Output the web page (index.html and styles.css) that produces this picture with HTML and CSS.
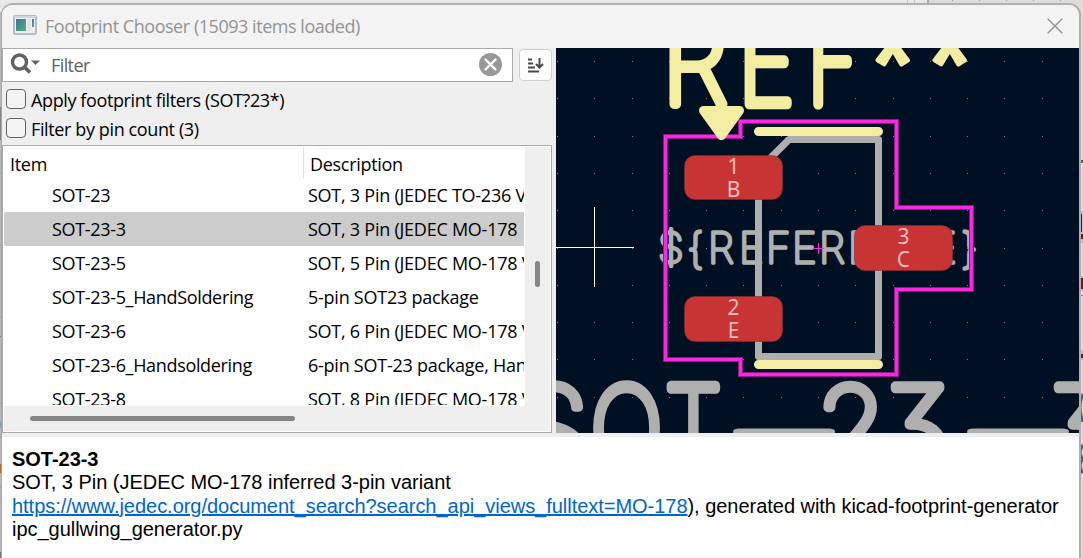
FILE: index.html
```html
<!DOCTYPE html>
<html lang="en">
<head>
<meta charset="utf-8">
<title>Footprint Chooser</title>
<link rel="stylesheet" href="styles.css">
</head>
<body>
<div class="desktop">
  <svg class="backdrop" width="1083" height="558" viewBox="0 0 1083 558">
    <rect width="928" height="20" fill="#e8e8e8"/>
    <rect x="907" width="1" height="5" fill="#c8c8c8"/><rect x="914" width="1" height="5" fill="#c8c8c8"/>
    <rect x="927" width="2" height="5" fill="#aaa"/>
    <rect y="12" width="3" height="546" fill="#b8b8ba"/>
    <rect y="107" width="3" height="33" fill="#858585"/>
    <path d="M0 173h3M0 245h3M0 317h3M0 403h3M0 437h3M0 487h3" stroke="#999" fill="none"/>
    <path d="M0 336q3 1 2 10" stroke="#6f6f6f" fill="none"/>
    <rect y="421" width="2" height="7" fill="#75a9ab"/><rect y="464" width="2" height="9" fill="#a76b27"/>
    <rect y="552" width="3" height="6" fill="#777"/>
    <path d="M952 .5h1M979 .5h1M1006 .5h1M1033 .5h1M1060 .5h1" stroke="#999"/>
    <rect x="1079" y="160" width="4" height="3" fill="#108a1e"/>
    <path d="M1081 211h2v32h-2zM1081 276h2v15h-2zM1081 350h2v10h-2z" fill="#98c8df"/>
    <path d="M1079 214h3v18h-3zM1079 234h4v5h-4zM1079 278h4v11h-4zM1079 354h4v4h-4z" fill="#800b10"/>
    <path d="M1083 394q-6 13 0 28M1083 445q-6 8 0 14q-6 6 0 14" stroke="#247479" stroke-width="3" fill="none"/>
    <path d="M1079 295.500h4" stroke="#888"/>
  </svg>
  <main class="window">
    <header class="titlebar">
      <svg class="app-icon" width="24" height="20" viewBox="0 0 24 20">
        <defs><linearGradient id="pane" x1="0" y1="0" x2="1" y2="1"><stop stop-color="#3a769f"/><stop offset="1" stop-color="#58ad7c"/></linearGradient></defs>
        <rect x="1" y="1" width="22" height="18" rx="1" fill="#eef0f2" stroke="#b4bec7" stroke-width="2"/>
        <path d="M1 2h22" stroke="#cdd8e4" stroke-width="2"/>
        <rect x="3" y="4" width="10" height="12" fill="url(#pane)"/>
        <rect x="14" y="4" width="4" height="12" fill="#e2e3e4"/><rect x="19" y="4" width="2" height="8" fill="url(#pane)"/>
      </svg>
      <h1 class="title">Footprint Chooser (15093 items loaded)</h1>
      <svg class="close" width="16" height="16" viewBox="0 0 16 16"><path d="M.7.7l14.600 14.600M15.300.7L.7 15.300" stroke="#929292" stroke-width="1.400"/></svg>
    </header>
    <div class="body">
      <section class="left">
        <div class="search-row">
          <div class="search">
            <svg class="magnifier" width="30" height="22" viewBox="0 0 30 22"><circle cx="9.500" cy="9" r="7" fill="none" stroke="#626262" stroke-width="3.400"/><path d="M14.500 14l5.500 5.500" stroke="#626262" stroke-width="3.800"/><path d="M21 7.500h9l-4.500 4.500z" fill="#626262"/></svg>
            <span class="placeholder">Filter</span>
            <svg class="clear" width="23" height="23" viewBox="0 0 23 23"><circle cx="11.500" cy="11.500" r="11.500" fill="#989898"/><path d="M6.500 6.500l10 10M16.500 6.500l-10 10" stroke="#fff" stroke-width="2.400" stroke-linecap="round"/></svg>
          </div>
          <button class="sort" aria-label="Sort"><svg width="17" height="15" viewBox="0 0 17 15"><path d="M1 2h4M1 6h5M1 10h7M1 14h11" transform="translate(0 -.5)" stroke="#4a4a4a" stroke-width="2"/><path d="M12.500 0v9M9 6l3.500 3.500L16 6" fill="none" stroke="#4a4a4a" stroke-width="2"/></svg></button>
        </div>
        <label class="check"><span class="box"></span><span class="check-text">Apply footprint filters (SOT?23*)</span></label>
        <label class="check"><span class="box"></span><span class="check-text">Filter by pin count (3)</span></label>
        <div class="list">
          <div class="grid">
            <div class="head"><span class="head-item">Item</span><span class="head-desc">Description</span></div>
            <div class="rows">
              <div class="row"><span class="item">SOT-23</span><span class="desc">SOT, 3 Pin (JEDEC TO-236 V</span></div>
              <div class="row selected"><span class="item">SOT-23-3</span><span class="desc">SOT, 3 Pin (JEDEC MO-178</span></div>
              <div class="row"><span class="item">SOT-23-5</span><span class="desc">SOT, 5 Pin (JEDEC MO-178 V</span></div>
              <div class="row"><span class="item">SOT-23-5_HandSoldering</span><span class="desc">5-pin SOT23 package</span></div>
              <div class="row"><span class="item">SOT-23-6</span><span class="desc">SOT, 6 Pin (JEDEC MO-178 V</span></div>
              <div class="row"><span class="item">SOT-23-6_Handsoldering</span><span class="desc">6-pin SOT-23 package, Han</span></div>
              <div class="row"><span class="item">SOT-23-8</span><span class="desc">SOT, 8 Pin (JEDEC MO-178 V</span></div>
            </div>
            <div class="hscroll"><div class="hthumb"></div></div>
          </div>
          <div class="vscroll"><div class="vthumb"></div></div>
        </div>
      </section>
      <svg class="canvas" width="523" height="385" viewBox="556 48 523 385">
        <rect x="556" y="48" width="523" height="385" fill="#001023"/>
        <path class="dots" d="M557 61.500h520M557 98.500h520M557 136.500h520M557 173.500h520M557 210.500h520M557 248.500h520M557 285.500h520M557 322.500h520M557 359.500h520M557 397.500h520"/>
        <g class="value">
          <text transform="translate(518 470)">S</text>
          <text transform="translate(590.500 470) scale(.84 1)">O</text>
          <text transform="translate(665 470) scale(.8 1)">T</text>
          <text transform="translate(712 468) scale(2.850 1)">-</text>
          <text transform="translate(816 470)">2</text>
          <text transform="translate(883 470)">3</text>
          <text transform="translate(946 468) scale(2.850 1)">-</text>
          <text transform="translate(1046 470)">3</text>
        </g>
        <text class="refname" x="658 687 708 739 766 792 819 848 872 903 932 961" y="262.500">${REFERENCE}</text>
        <path class="fab" d="M789 139.500H878.500V356.500H758.500V170z"/>
        <g class="ref">
          <text transform="translate(662 104) scale(.93 1)">R</text>
          <text transform="translate(738 104) scale(.84 1)">E</text>
          <text transform="translate(807.500 104) scale(.75 1)">F</text>
          <text class="star" x="870.500" y="103">*</text>
          <text class="star" x="927.500" y="103">*</text>
        </g>
        <path class="silk" d="M758.500 131.500h120M758.500 364.500h120"/>
        <path class="court-edge" d="M665.500 136.500H740.500V121.500H896.500V207.500H971.500V289.500H896.500V374.500H740.500V359.500H665.500z"/>
        <path class="court" d="M665.500 136.500H740.500V121.500H896.500V207.500H971.500V289.500H896.500V374.500H740.500V359.500H665.500z"/>
        <path class="pin-arrow" d="M703.500 110.500h36l-18 25z"/>
        <path d="M813 248.500h11M818.500 243v11" stroke="#ff26e2"/>
        <g class="pads">
          <rect x="684.500" y="155.500" width="98" height="44" rx="10.500"/>
          <rect x="684.500" y="296.500" width="98" height="45" rx="10.500"/>
          <rect x="854.500" y="225.500" width="98" height="45" rx="10.500"/>
        </g>
        <g class="pad-text">
          <text x="733.500" y="173.500">1</text><text x="733.500" y="196.500">B</text>
          <text x="733.500" y="314.500">2</text><text x="733.500" y="338">E</text>
          <text x="903.500" y="244">3</text><text x="903.500" y="267">C</text>
        </g>
        <path d="M556 247.500h78M594.500 207v80" stroke="#fff"/>
      </svg>
    </div>
    <section class="details">
      <b class="line">SOT-23-3</b>
      <span class="line">SOT, 3 Pin (JEDEC MO-178 inferred 3-pin variant</span>
      <span class="line"><a class="link">https://www.jedec.org/document_search?search_api_views_fulltext=MO-178</a>), generated with kicad-footprint-generator</span>
      <span class="line">ipc_gullwing_generator.py</span>
    </section>
  </main>
</div>
</body>
</html>
```
FILE: styles.css
```css
* { box-sizing: border-box; }
body { margin: 0; overflow: hidden; font-family: "Open Sans", sans-serif; font-size: 18px; color: #000; }
.desktop { position: relative; width: 1083px; height: 558px; background: #deddd9; overflow: hidden; }
.backdrop { position: absolute; left: 0; top: 0; }
.window { position: relative; margin: 3px 0 0 1px; width: 1080px; height: 570px; border: 2px solid #b0b0b0; border-left: 1px solid #a8a8aa; border-radius: 12px; overflow: hidden; background: #efefef; display: flex; flex-direction: column; }
.titlebar { height: 43px; flex: none; background: #f3f3f3; display: flex; align-items: center; padding: 0 16px 2px 11px; }
.app-icon { margin-right: 8px; margin-top: -1px; }
.title { margin: 0; flex: 1; font-size: 18px; font-weight: 400; color: #939393; letter-spacing: -0.46px; white-space: nowrap; }
.body { display: flex; height: 385px; flex: none; }
.left { width: 550px; margin-right: 4px; flex: none; }
.search-row { display: flex; height: 34px; }
.search { width: 511px; height: 34px; border: 1px solid #a9a9b0; background: #fff; display: flex; align-items: center; padding: 0 10px 0 7px; }
.magnifier { margin-top: -2px; }
.placeholder { flex: 1; margin-left: 11px; color: #5f5f5f; letter-spacing: -0.6px; }
.clear { margin-top: -1px; }
.sort { margin: 1px 0 0 6px; width: 33px; height: 32px; padding: 0; border: 1px solid #cfcfcf; border-radius: 4px; background: #fdfdfd; display: flex; align-items: center; justify-content: center; }
.check { display: flex; height: 29px; align-items: center; padding-left: 4px; }
.search-row + .check { margin-top: 3px; }
.box { width: 20px; height: 20px; border: 1px solid #626262; border-radius: 4px; background: #f4f4f4; margin: -1px 5px 0 0; }
.check-text { letter-spacing: -0.38px; }
.list { margin-top: 2px; height: 288px; border: 1px solid #a9a9b0; background: #fff; display: flex; padding: 1px; }
.grid { width: 521px; overflow: hidden; }
.head { display: flex; height: 31px; line-height: 34px; letter-spacing: -0.3px; }
.head-item { width: 300px; padding-left: 6px; border-right: 1px solid #e0e0e0; }
.head-desc { padding-left: 6px; }
.rows { width: 520px; height: 227px; margin-bottom: 1px; overflow: hidden; }
.row { display: flex; height: 34px; line-height: 34px; white-space: nowrap; }
.selected { background: #ccc; border-radius: 2px 0 0 2px; }
.item { width: 304px; flex: none; padding-left: 48px; letter-spacing: -0.33px; }
.desc { letter-spacing: -0.25px; }
.hscroll { height: 25px; background: #efefef; padding: 10px 0 0 26px; }
.hthumb { width: 265px; height: 5px; border-radius: 3px; background: #868686; }
.vscroll { flex: 1; background: #efefef; padding: 114px 0 0 10px; }
.vthumb { width: 5px; height: 26px; border-radius: 3px; background: #868686; }
.canvas { flex: none; display: block; }
.dots { stroke: #777f86; stroke-dasharray: 1 36 1 37 1 36 1 36 1 36 1 37 1 36 1 36 1 37 1 36 1 36 1 36 1 37 1 40; }
.value, .ref, .refname { font-family: Inter, sans-serif; font-weight: 100; stroke-linejoin: round; font-feature-settings: "cv09"; }
.value text, .ref text { vector-effect: non-scaling-stroke; }
.value { font-size: 115px; fill: #afafaf; stroke: #afafaf; stroke-width: 9.5px; }
.ref { font-size: 115px; fill: #f2eda1; stroke: #f2eda1; stroke-width: 9.5px; }
.star { font-family: "Liberation Sans", sans-serif; stroke-width: 4px; }
.refname { font-size: 42px; fill: #afafaf; stroke: #afafaf; stroke-width: 3.4px; }
.fab { fill: none; stroke: #afafaf; stroke-width: 7; stroke-linejoin: round; }
.silk { stroke: #f2eda1; stroke-width: 9; stroke-linecap: round; }
.court-edge { fill: none; stroke: #8c1a86; stroke-width: 5; }
.court { fill: none; stroke: #ff26e2; stroke-width: 3; }
.pin-arrow { fill: #f2eda1; stroke: #f2eda1; stroke-width: 9; stroke-linejoin: round; }
.pads rect { fill: #c83434; stroke: #8b2930; stroke-width: .6; }
.pad-text { font-family: "Noto Sans", sans-serif; font-size: 21px; fill: #f0bcbc; text-anchor: middle; }
.details { flex: 1; margin-top: 4px; background: #fff; padding: 10.5px 0 0 10px; font-family: "Liberation Sans", Arial, sans-serif; font-size: 20px; line-height: 23.6px; letter-spacing: -0.03px; }
.line { display: block; white-space: nowrap; }
.link { color: #0066cc; text-decoration: underline; }
```
